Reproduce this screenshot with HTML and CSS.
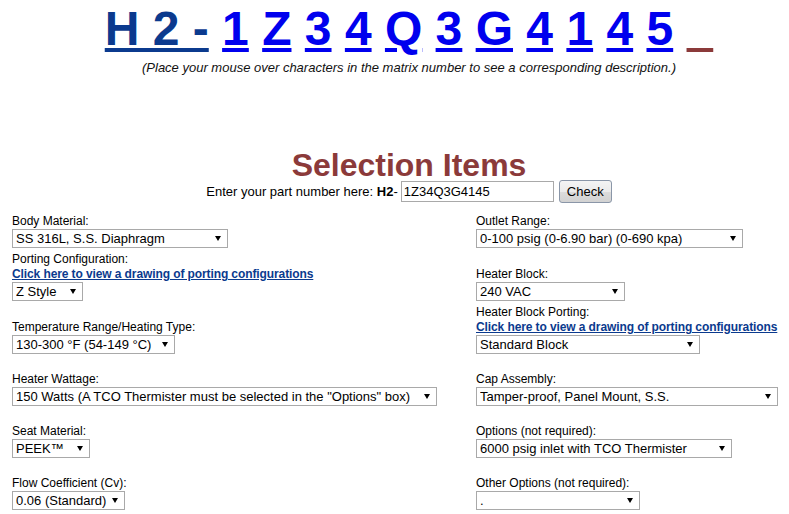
FILE: index.html
```html
<!DOCTYPE html>
<html lang="en">
<head>
    <meta charset="UTF-8">
    <title>H2 Matrix - Selection Items</title>
    <link rel="stylesheet" href="styles.css">
</head>
<body>
    <div class="top">
        <div class="matrix">
            <a href="#" class="base">H 2 -</a>
            <a href="#">1</a> <a href="#">Z</a> <a href="#">3</a> <a href="#">4</a>
            <a href="#">Q</a> <a href="#">3</a> <a href="#">G</a> <a href="#">4</a>
            <a href="#">1</a> <a href="#">4</a> <a href="#">5</a> <a href="#" class="blank">_</a>
        </div>
        <div class="hint">(Place your mouse over characters in the matrix number to see a corresponding description.)</div>

        <h1>Selection Items</h1>
        <form class="part-row">
            <span>Enter your part number here: <b>H2</b>-</span>
            <input type="text" class="part-input" value="1Z34Q3G4145">
            <button type="button" class="check">Check</button>
        </form>
    </div>

    <div class="form-grid">
        <div class="cell">
            <label>Body Material:</label>
            <span class="sel"><select class="w-body"><option>SS 316L, S.S. Diaphragm</option></select></span>
        </div>
        <div class="cell">
            <label>Outlet Range:</label>
            <span class="sel"><select class="w-outlet"><option>0-100 psig (0-6.90 bar) (0-690 kpa)</option></select></span>
        </div>

        <div class="cell">
            <label>Porting Configuration:</label>
            <a href="#" class="drawing-link">Click here to view a drawing of porting configurations</a>
            <span class="sel"><select class="w-zstyle"><option>Z Style</option></select></span>
        </div>
        <div class="cell">
            <label>Heater Block:</label>
            <span class="sel"><select class="w-block"><option>240 VAC</option></select></span>
        </div>

        <div class="cell">
            <label>Temperature Range/Heating Type:</label>
            <span class="sel"><select class="w-temp"><option>130-300 °F (54-149 °C)</option></select></span>
        </div>
        <div class="cell">
            <label>Heater Block Porting:</label>
            <a href="#" class="drawing-link">Click here to view a drawing of porting configurations</a>
            <span class="sel"><select class="w-porting"><option>Standard Block</option></select></span>
        </div>

        <div class="cell sep">
            <label>Heater Wattage:</label>
            <span class="sel"><select class="w-watt"><option>150 Watts (A TCO Thermister must be selected in the "Options" box)</option></select></span>
        </div>
        <div class="cell sep">
            <label>Cap Assembly:</label>
            <span class="sel"><select class="w-cap"><option>Tamper-proof, Panel Mount, S.S.</option></select></span>
        </div>

        <div class="cell sep">
            <label>Seat Material:</label>
            <span class="sel"><select class="w-seat"><option>PEEK™</option></select></span>
        </div>
        <div class="cell sep">
            <label>Options (not required):</label>
            <span class="sel"><select class="w-options"><option>6000 psig inlet with TCO Thermister</option></select></span>
        </div>

        <div class="cell sep">
            <label>Flow Coefficient (Cv):</label>
            <span class="sel"><select class="w-flow"><option>0.06 (Standard)</option></select></span>
        </div>
        <div class="cell sep">
            <label>Other Options (not required):</label>
            <span class="sel"><select class="w-other"><option>.</option></select></span>
        </div>
    </div>
</body>
</html>
```

FILE: styles.css
```css
body {
    font-family: Arial, "Liberation Sans", sans-serif;
    margin: 0;
    background-color: white;
    color: #000;
    overflow: hidden;
}

.top {
    padding-left: 29px;
    text-align: center;
}

.matrix {
    padding-top: 1px;
    font-size: 48px;
    font-weight: bold;
    white-space: nowrap;
}

.matrix a {
    color: #0000ee;
    text-decoration: underline;
}

.matrix a.base {
    color: #0b3a8e;
}

/* empty slot: only the brown underline shows */
.matrix a.blank {
    color: transparent;
    text-decoration: underline;
    text-decoration-color: #8b3a3a;
}

.hint {
    margin-top: 4px;
    font-size: 13px;
    font-style: italic;
    color: #111;
}

h1 {
    margin: 75px 0 0 0;
    font-size: 32px;
    line-height: 30px;
    color: #8b3a3a;
}

.part-row {
    display: flex;
    justify-content: center;
    align-items: center;
    height: 23px;
    margin-top: 0;
    font-size: 13px;
}

.part-input {
    box-sizing: border-box;
    width: 153px;
    height: 21px;
    margin: 0 0 0 3px;
    padding: 0 2px;
    border: 1px solid #a9a9a9;
    font-family: Arial, "Liberation Sans", sans-serif;
    font-size: 13px;
}

.check {
    box-sizing: border-box;
    width: 53px;
    height: 23px;
    margin-left: 5px;
    padding: 0;
    border: 1px solid #8a96a8;
    border-radius: 3px;
    background: linear-gradient(#f4f4f4 0%, #ebebeb 50%, #dcdcdc 51%, #d2d2d2 100%);
    font-family: Arial, "Liberation Sans", sans-serif;
    font-size: 13px;
    color: #000;
}

.form-grid {
    display: grid;
    grid-template-columns: 464px auto;
    align-items: end;
    row-gap: 4px;
    margin-top: 11px;
    padding-left: 12px;
}

.cell label,
.drawing-link {
    display: block;
    font-size: 12px;
    line-height: 15px;
}

.cell.sep {
    margin-top: 14px;
}

.drawing-link {
    color: #0b3a8e;
    font-weight: bold;
    letter-spacing: -0.1px;
    text-decoration: underline;
}

.sel {
    position: relative;
    display: inline-block;
    vertical-align: top;
}

.sel select {
    box-sizing: border-box;
    height: 19px;
    padding: 0 0 0 3px;
    border: 1px solid #a9a9a9;
    border-radius: 0;
    background: white;
    font-family: Arial, "Liberation Sans", sans-serif;
    font-size: 13px;
    color: #000;
    appearance: none;
    -webkit-appearance: none;
}

.sel::after {
    content: "";
    position: absolute;
    right: 7px;
    top: 7px;
    border-top: 5px solid #000;
    border-left: 3px solid transparent;
    border-right: 3px solid transparent;
    pointer-events: none;
}

.w-body { width: 216px; }
.w-zstyle { width: 71px; }
.w-temp { width: 163px; }
.w-watt { width: 425px; }
.w-seat { width: 78px; }
.w-flow { width: 113px; }
.w-outlet { width: 267px; }
.w-block { width: 149px; }
.w-porting { width: 224px; }
.w-cap { width: 302px; }
.w-options { width: 256px; }
.w-other { width: 164px; }
```
